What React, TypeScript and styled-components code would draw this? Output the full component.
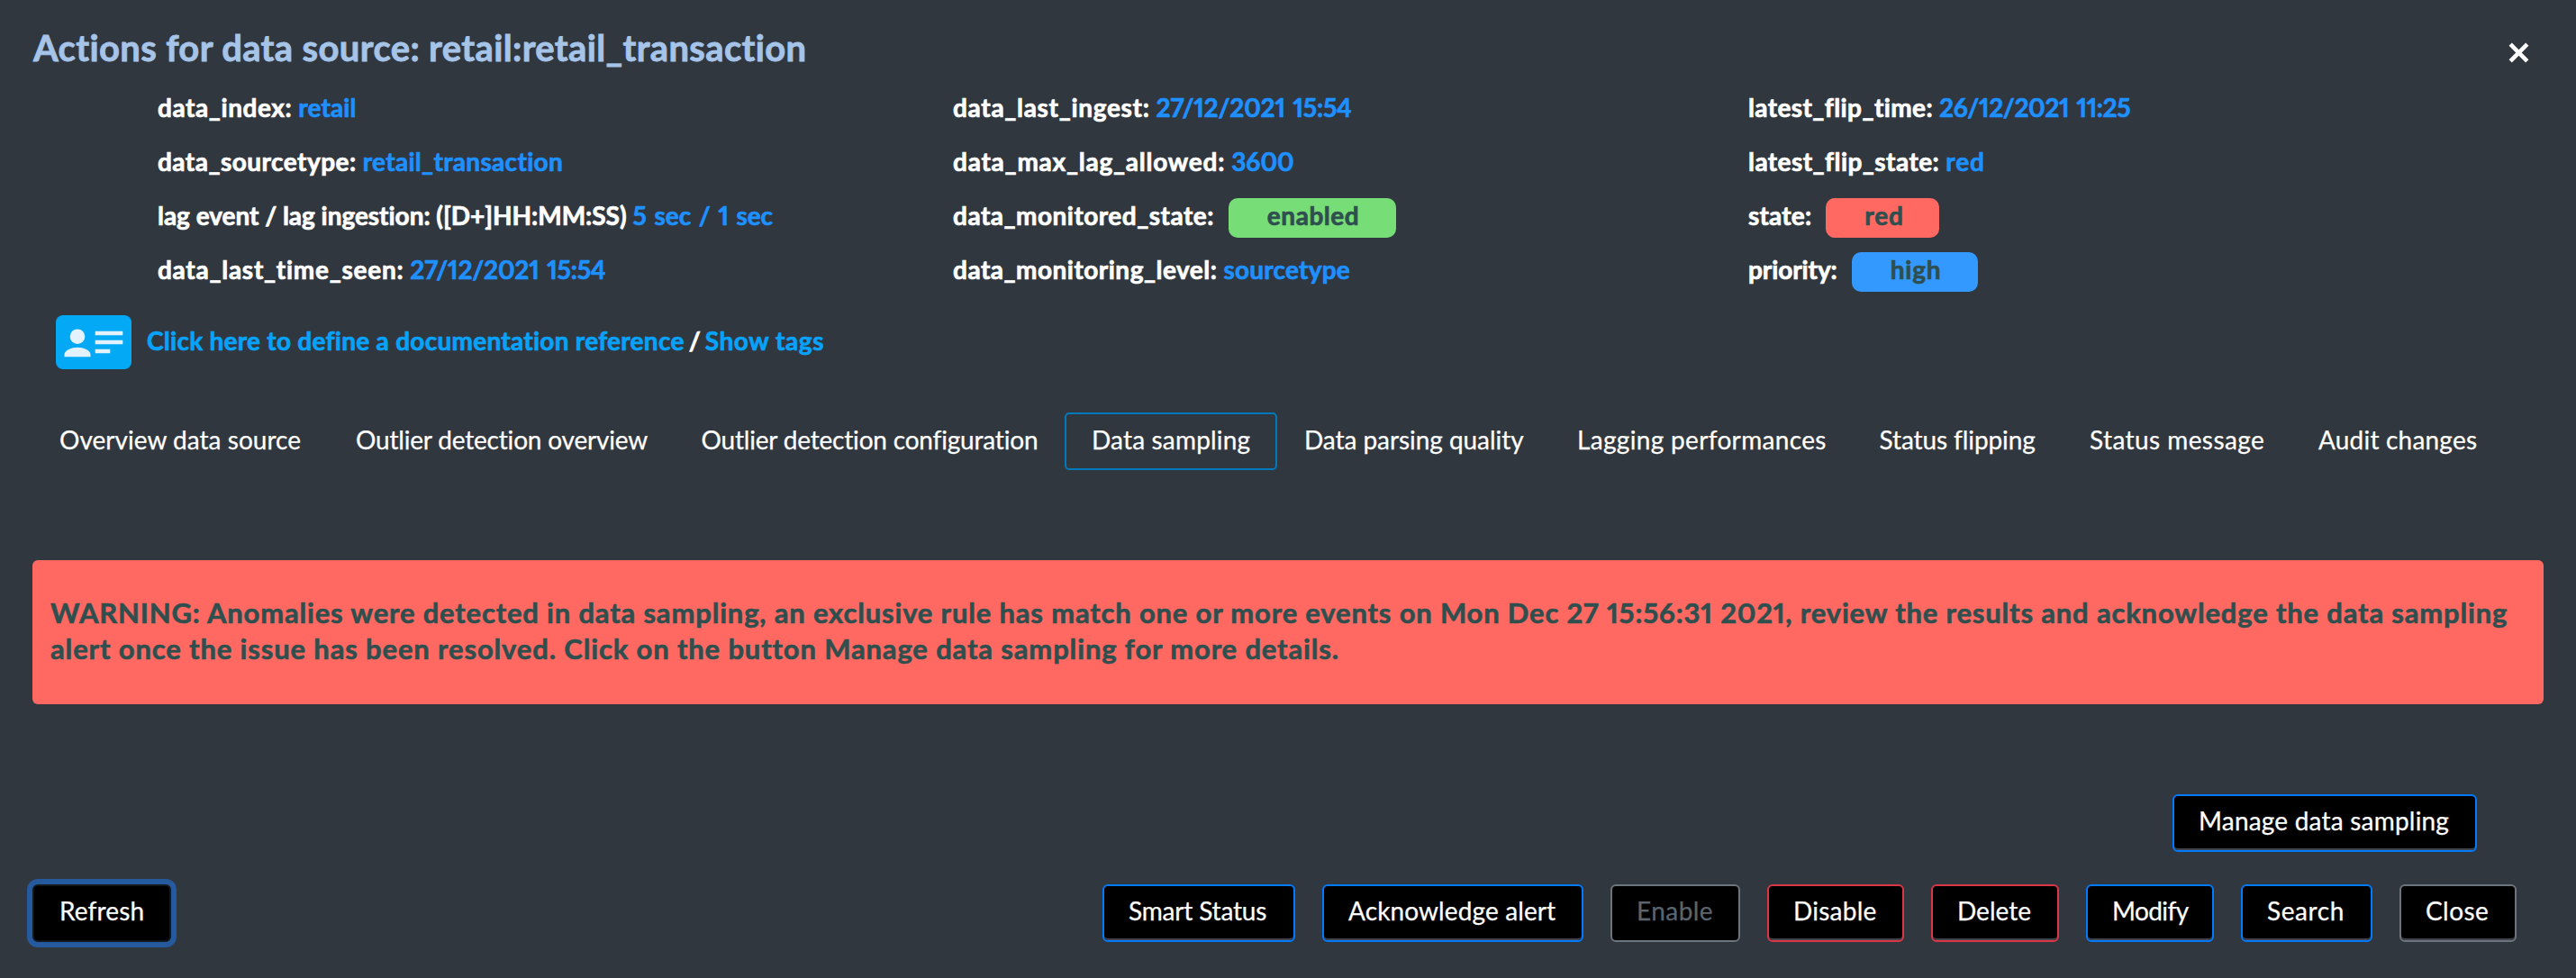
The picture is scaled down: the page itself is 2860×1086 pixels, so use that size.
import React from 'react';
import styled, { createGlobalStyle } from 'styled-components';

const GlobalStyle = createGlobalStyle`
  * { box-sizing: border-box; }
  body { margin: 0; background: #31373e; }
`;

const Dialog = styled.main`
  width: 2860px;
  height: 1086px;
  background: #31373e;
  color: #fff;
  font: 400 28px/1.2 Lato, "Open Sans", sans-serif;
  display: flex;
  flex-direction: column;
  white-space: nowrap;
  font-variant-ligatures: none;
  -webkit-text-stroke: 0.25px currentColor;
`;

const Text = styled.span<{ $ls?: number }>`
  letter-spacing: ${(p) => p.$ls ?? 0}px;
`;

const Header = styled.header`
  height: 90px;
  display: flex;
  justify-content: space-between;
  align-items: flex-start;
  padding: 0 52px 0 37px;
`;

const Title = styled.h1`
  margin: 0;
  font-size: 40px;
  line-height: 107px;
  font-weight: 700;
  letter-spacing: 0.35px;
  color: #a6c4e8;
  -webkit-text-stroke-width: 0.8px;
`;

const CloseIcon = styled.button`
  margin-top: 47px;
  padding: 0;
  width: 23px;
  height: 23px;
  border: 0;
  background: none;
  svg { display: block; }
`;

const Facts = styled.section`
  display: grid;
  grid-template-columns: 883px 883px 883px;
  padding-left: 175px;
`;

const Column = styled.div`
  display: flex;
  flex-direction: column;
`;

const Fact = styled.div`
  display: flex;
  align-items: flex-start;
  height: 60px;
  line-height: 59px;
  font-weight: 700;
  -webkit-text-stroke-width: 0.7px;
`;

const Value = styled(Text)`
  margin-left: 7px;
  color: #1e90ff;
  font-variant-numeric: proportional-nums;
  word-spacing: 2px;
`;

const Badge = styled(Text)<{ $bg: string; $w: number }>`
  margin: 10px 0 0 16px;
  padding-left: 43px;
  width: ${(p) => p.$w}px;
  height: 44px;
  line-height: 38px;
  border-radius: 10px;
  background: ${(p) => p.$bg};
  color: #2f4f4f;
`;

const DocRow = styled.div`
  display: flex;
  align-items: flex-start;
  height: 60px;
  margin: 20px 0 0 62px;
  line-height: 56px;
  font-weight: 700;
  -webkit-text-stroke-width: 0.7px;
  svg { display: block; margin-right: 17px; }
`;

const Link = styled(Text)`
  color: #07a3fb;
`;

const Slash = styled.span`
  margin: 0 5px;
`;

const Tabs = styled.nav`
  display: flex;
  margin: 48px 0 0 36px;
`;

const Tab = styled(Text)<{ $w: number; $active?: boolean }>`
  width: ${(p) => p.$w}px;
  height: 64px;
  padding-left: 28px;
  line-height: 56px;
  border: 2px solid ${(p) => (p.$active ? '#007abd' : 'transparent')};
  border-radius: 5px;
`;

const Warning = styled.section`
  margin: 100px 36px 0;
  height: 160px;
  padding: 38px 20px 0;
  border-radius: 6px;
  background: #ff6961;
  color: #2f4f4f;
  font-size: 31px;
  line-height: 40px;
  font-weight: 700;
  font-variant-numeric: proportional-nums;
  -webkit-text-stroke-width: 0.6px;
`;

const tones = { blue: '#007bff', red: '#dc3545', gray: '#6c757d' };

const Button = styled.button<{ $w: number; $ls?: number; $tone?: keyof typeof tones; $focus?: boolean }>`
  width: ${(p) => p.$w}px;
  height: 64px;
  padding: 0 0 6px ${(p) => (p.$focus ? 28 : 27)}px;
  text-align: left;
  font: inherit;
  line-height: 54px;
  letter-spacing: ${(p) => p.$ls ?? 0}px;
  color: #fff;
  background: #000;
  border: 2px solid ${(p) => tones[p.$tone ?? 'blue']};
  border-radius: 6px;
  box-shadow: inset 0 -2px 0 #40434c;
  ${(p) => p.$focus && 'border-color: #12181c; box-shadow: 0 0 0 6px #255a9e;'}
  &:disabled { color: #5a6570; box-shadow: none; }
`;

const PanelActions = styled.div`
  display: flex;
  justify-content: flex-end;
  margin: 100px 110px 0 0;
`;

const Footer = styled.footer`
  display: flex;
  justify-content: space-between;
  margin: 36px 66px 0 36px;
`;

const ButtonGroup = styled.div`
  display: flex;
  gap: 30px;
`;

type FactItem = { label: string; ls: number; value: string; vs: number; bg?: string; w?: number };

const facts: FactItem[][] = [
  [
    { label: 'data_index:', ls: 0.58, value: 'retail', vs: 0.12 },
    { label: 'data_sourcetype:', ls: 0.47, value: 'retail_transaction', vs: 0.32 },
    { label: 'lag event / lag ingestion: ([D+]HH:MM:SS)', ls: -0.03, value: '5 sec / 1 sec', vs: -0.1 },
    { label: 'data_last_time_seen:', ls: 0.73, value: '27/12/2021 15:54', vs: -0.2 },
  ],
  [
    { label: 'data_last_ingest:', ls: 0.69, value: '27/12/2021 15:54', vs: -0.2 },
    { label: 'data_max_lag_allowed:', ls: 0.76, value: '3600', vs: 0 },
    { label: 'data_monitored_state:', ls: 0.49, value: 'enabled', vs: 0.54, bg: '#77dd77', w: 186 },
    { label: 'data_monitoring_level:', ls: 0.49, value: 'sourcetype', vs: 0.23 },
  ],
  [
    { label: 'latest_flip_time:', ls: 0.4, value: '26/12/2021 11:25', vs: -0.4 },
    { label: 'latest_flip_state:', ls: 0.44, value: 'red', vs: 0.9 },
    { label: 'state:', ls: 0.18, value: 'red', vs: 0.9, bg: '#ff6961', w: 126 },
    { label: 'priority:', ls: -0.09, value: 'high', vs: 0.8, bg: '#3399ff', w: 140 },
  ],
];

const tabs: [string, number, number][] = [
  ['Overview data source', 329, 0.03],
  ['Outlier detection overview', 383.5, -0.19],
  ['Outlier detection configuration', 433.5, -0.19],
  ['Data sampling', 236, 0.16],
  ['Data parsing quality', 303, -0.06],
  ['Lagging performances', 335.5, 0.33],
  ['Status flipping', 233.5, -0.1],
  ['Status message', 254, 0.42],
  ['Audit changes', 237, 0.2],
];

export default function App() {
  return (
    <Dialog>
      <GlobalStyle />
      <Header>
        <Title>Actions for data source: retail:retail_transaction</Title>
        <CloseIcon aria-label="Close dialog">
          <svg width="23" height="23" viewBox="0 0 23 23" stroke="#fff" strokeWidth="4.6">
            <path d="M2.2 2.2 20.8 20.8M20.8 2.2 2.2 20.8" />
          </svg>
        </CloseIcon>
      </Header>
      <Facts>
        {facts.map((column, i) => (
          <Column key={i}>
            {column.map((f) => (
              <Fact key={f.label}>
                <Text $ls={f.ls}>{f.label}</Text>
                {f.bg ? (
                  <Badge $ls={f.vs} $bg={f.bg} $w={f.w!}>{f.value}</Badge>
                ) : (
                  <Value $ls={f.vs}>{f.value}</Value>
                )}
              </Fact>
            ))}
          </Column>
        ))}
      </Facts>
      <DocRow>
        <svg width="84" height="60" viewBox="0 0 84 60">
          <rect width="84" height="60" rx="8" fill="#03a9f4" />
          <g fill="#e3f2fd">
            <circle cx="24" cy="23.7" r="8.3" />
            <path d="M9.5 46.3v-2.5c0-5 8-8.1 14.5-8.1s14.5 3.1 14.5 8.1v2.5z" />
            <path d="M43.7 17.7h30.6v4.6H43.7zM43.7 27.7h30.6v4.6H43.7zM43.7 37.7h16.6v4.6H43.7z" />
          </g>
        </svg>
        <Link $ls={0.27}>Click here to define a documentation reference</Link>
        <Slash>/</Slash>
        <Link $ls={0.57}>Show tags</Link>
      </DocRow>
      <Tabs>
        {tabs.map(([label, w, ls]) => (
          <Tab key={label} $w={w} $ls={ls} $active={label === 'Data sampling'}>{label}</Tab>
        ))}
      </Tabs>
      <Warning>
        <Text $ls={0.82}>
          WARNING: Anomalies were detected in data sampling, an exclusive rule has match one or more events on Mon Dec 27 15:56:31 2021, review the results and acknowledge the data sampling
        </Text>
        <br />
        <Text $ls={0.85}>
          alert once the issue has been resolved. Click on the button Manage data sampling for more details.
        </Text>
      </Warning>
      <PanelActions>
        <Button $w={338} $ls={0.2}>Manage data sampling</Button>
      </PanelActions>
      <Footer>
        <Button $w={154} $ls={0.13} $focus>Refresh</Button>
        <ButtonGroup>
          <Button $w={214} $ls={-0.18}>Smart Status</Button>
          <Button $w={290} $ls={0.11}>Acknowledge alert</Button>
          <Button $w={144} $ls={0.45} $tone="gray" disabled>Enable</Button>
          <Button $w={152} $ls={0.25} $tone="red">Disable</Button>
          <Button $w={142} $tone="red">Delete</Button>
          <Button $w={142} $ls={-0.6}>Modify</Button>
          <Button $w={146} $ls={0.59}>Search</Button>
          <Button $w={130} $ls={0.41} $tone="gray">Close</Button>
        </ButtonGroup>
      </Footer>
    </Dialog>
  );
}
